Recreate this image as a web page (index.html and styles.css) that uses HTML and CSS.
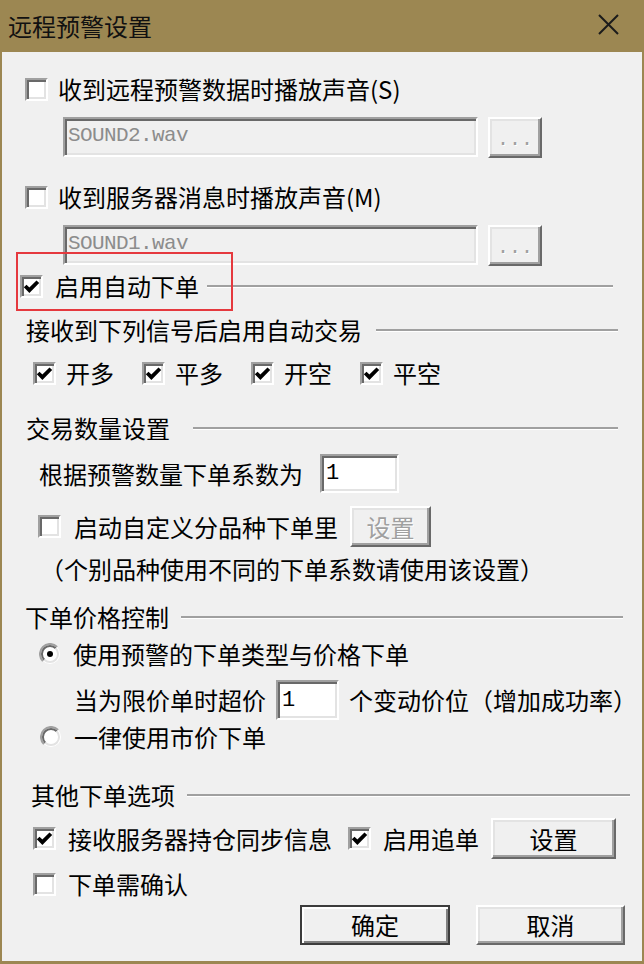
FILE: index.html
```html
<!DOCTYPE html>
<html lang="zh-CN">
<head>
  <meta charset="UTF-8" />
  <title>远程预警设置</title>
  <link rel="stylesheet" href="styles.css">
</head>
<body>
  <div class="window">
    <div class="titlebar">
      <span class="title">远程预警设置</span>
      <svg class="close" viewBox="0 0 21 21" width="21" height="21">
        <path d="M1 1 L20 20 M20 1 L1 20" stroke="#1b1b1b" stroke-width="2" fill="none"/>
      </svg>
    </div>

    <div class="content">
      <div class="row sound">
        <label class="check"><span class="cb"></span><span class="label">收到远程预警数据时播放声音(S)</span></label>
      </div>
      <div class="row file">
        <div class="field disabled path">SOUND2.wav</div>
        <div class="btn disabled browse">...</div>
      </div>

      <div class="row sound sound-msg">
        <label class="check"><span class="cb"></span><span class="label">收到服务器消息时播放声音(M)</span></label>
      </div>
      <div class="row file">
        <div class="field disabled path">SOUND1.wav</div>
        <div class="btn disabled browse">...</div>
      </div>

      <div class="row auto">
        <label class="check wide">
          <span class="cb"><svg viewBox="0 0 18 18"><path d="M3 8.5 L7 12.5 L15 4.5" /></svg></span>
          <span class="label">启用自动下单</span>
        </label>
        <span class="rule"></span>
      </div>

      <div class="row group g-signal">
        <span class="label">接收到下列信号后启用自动交易</span>
        <span class="rule"></span>
      </div>
      <div class="row signals">
        <label class="check"><span class="cb"><svg viewBox="0 0 18 18"><path d="M3 8.5 L7 12.5 L15 4.5" /></svg></span><span class="label">开多</span></label>
        <label class="check"><span class="cb"><svg viewBox="0 0 18 18"><path d="M3 8.5 L7 12.5 L15 4.5" /></svg></span><span class="label">平多</span></label>
        <label class="check"><span class="cb"><svg viewBox="0 0 18 18"><path d="M3 8.5 L7 12.5 L15 4.5" /></svg></span><span class="label">开空</span></label>
        <label class="check"><span class="cb"><svg viewBox="0 0 18 18"><path d="M3 8.5 L7 12.5 L15 4.5" /></svg></span><span class="label">平空</span></label>
      </div>

      <div class="row group g-qty">
        <span class="label">交易数量设置</span>
        <span class="rule"></span>
      </div>
      <div class="row ratio">
        <span class="label">根据预警数量下单系数为</span>
        <div class="field num ratio-num">1</div>
      </div>
      <div class="row custom">
        <label class="check wide"><span class="cb"></span><span class="label">启动自定义分品种下单里</span></label>
        <div class="btn disabled custom-btn">设置</div>
      </div>
      <div class="row note">
        <span class="label">（个别品种使用不同的下单系数请使用该设置）</span>
      </div>

      <div class="row group g-price">
        <span class="label">下单价格控制</span>
        <span class="rule"></span>
      </div>
      <div class="row option first">
        <label class="check wide">
          <svg class="radio" viewBox="0 0 22 22" width="22" height="22">
            <circle cx="11" cy="11" r="10" fill="#fff"/>
            <path d="M3.9 18.1 A10 10 0 0 1 18.1 3.9" stroke="#a0a0a0" stroke-width="2" fill="none"/>
            <path d="M5.3 16.7 A8 8 0 0 1 16.7 5.3" stroke="#696969" stroke-width="2" fill="none"/>
            <path d="M5.3 16.7 A8 8 0 0 0 16.7 5.3" stroke="#e3e3e3" stroke-width="2" fill="none"/>
            <circle cx="11" cy="11" r="3" fill="#000"/>
          </svg>
          <span class="label">使用预警的下单类型与价格下单</span>
        </label>
      </div>
      <div class="row slip">
        <span class="label">当为限价单时超价</span>
        <div class="field num slip-num">1</div>
        <span class="label">个变动价位（增加成功率）</span>
      </div>
      <div class="row option second">
        <label class="check wide">
          <svg class="radio" viewBox="0 0 22 22" width="22" height="22">
            <circle cx="11" cy="11" r="10" fill="#fff"/>
            <path d="M3.9 18.1 A10 10 0 0 1 18.1 3.9" stroke="#a0a0a0" stroke-width="2" fill="none"/>
            <path d="M5.3 16.7 A8 8 0 0 1 16.7 5.3" stroke="#696969" stroke-width="2" fill="none"/>
            <path d="M5.3 16.7 A8 8 0 0 0 16.7 5.3" stroke="#e3e3e3" stroke-width="2" fill="none"/>
          </svg>
          <span class="label">一律使用市价下单</span>
        </label>
      </div>

      <div class="row group g-other">
        <span class="label">其他下单选项</span>
        <span class="rule"></span>
      </div>
      <div class="row other">
        <label class="check wide"><span class="cb"><svg viewBox="0 0 18 18"><path d="M3 8.5 L7 12.5 L15 4.5" /></svg></span><span class="label">接收服务器持仓同步信息</span></label>
        <label class="check wide follow"><span class="cb"><svg viewBox="0 0 18 18"><path d="M3 8.5 L7 12.5 L15 4.5" /></svg></span><span class="label">启用追单</span></label>
        <div class="btn follow-btn">设置</div>
      </div>
      <div class="row confirm">
        <label class="check wide"><span class="cb"></span><span class="label">下单需确认</span></label>
      </div>

      <div class="row actions">
        <div class="btn default">确定</div>
        <div class="btn cancel">取消</div>
      </div>

      <div class="mark"></div>
    </div>
  </div>
</body>
</html>
```

FILE: styles.css
```css
body {
  margin: 0;
  background: #9c8752;
  font-family: "Noto Sans CJK SC", "Noto Sans", sans-serif;
  font-size: 24px;
  color: #000;
}

.window {
  width: 644px;
  height: 964px;
  box-sizing: border-box;
  padding: 0 2px 3px;
  display: flex;
  flex-direction: column;
  background: #9c8752;
}

.titlebar {
  height: 52px;
  flex: none;
  display: flex;
  align-items: center;
  justify-content: space-between;
  padding: 0 23px 0 6px;
}

.title {
  line-height: 1;
  color: #111;
}

.close {
  margin-top: -3px;
}

.content {
  flex: 1;
  position: relative;
  background: #f0f0f0;
  padding-top: 21px;
}

/* rows */
.row {
  display: flex;
  align-items: center;
  height: 32px;
}

.label {
  line-height: 1;
  white-space: nowrap;
}

.check {
  display: flex;
  align-items: center;
  gap: 10px;
}

.check.wide {
  gap: 12px;
}

.rule {
  flex: 1;
  height: 0;
  border-top: 2px solid #a0a0a0;
  border-bottom: 1px solid #fff;
}

/* checkbox */
.cb {
  width: 23px;
  height: 23px;
  box-sizing: border-box;
  flex: none;
  background: #fff;
  border: 2px solid;
  border-color: #a0a0a0 #fff #fff #a0a0a0;
  box-shadow: inset 2px 2px 0 #696969, inset -2px -2px 0 #e3e3e3;
}

.cb svg {
  display: block;
  width: 19px;
  height: 19px;
}

.cb svg path {
  fill: none;
  stroke: #000;
  stroke-width: 3.6;
}

.radio {
  flex: none;
}

/* text fields */
.field {
  box-sizing: border-box;
  height: 100%;
  display: flex;
  align-items: center;
  padding-left: 3px;
  background: #fff;
  border: 2px solid;
  border-color: #a0a0a0 #fff #fff #a0a0a0;
  box-shadow: inset 2px 2px 0 #696969, inset -2px -2px 0 #e3e3e3;
  font-family: "Liberation Mono", monospace;
}

.field.disabled {
  background: #f0f0f0;
  color: #8c8c8c;
}

.path {
  width: 415px;
  font-size: 21px;
  letter-spacing: -0.6px;
  padding-bottom: 4px;
}

.num {
  font-size: 22px;
  padding-left: 4px;
}

.ratio-num {
  width: 79px;
}

.slip-num {
  width: 63px;
}

/* buttons */
.btn {
  box-sizing: border-box;
  height: 100%;
  display: flex;
  align-items: center;
  justify-content: center;
  background: #f0f0f0;
  border: 2px solid;
  border-color: #fff #696969 #696969 #fff;
  box-shadow: inset -2px -2px 0 #a0a0a0, inset 2px 2px 0 #e3e3e3;
  line-height: 1;
}

.btn.disabled {
  color: #a0a0a0;
  text-shadow: 1px 1px 0 #fff;
}

.browse {
  width: 54px;
  height: 41px;
  font-family: "Liberation Mono", monospace;
  font-size: 20px;
  padding-top: 6px;
}

.btn.default {
  width: 150px;
  border-color: #3c3c3c;
  box-shadow: inset 2px 2px 0 #fff, inset -2px -2px 0 #808080;
}

.btn.cancel {
  width: 149px;
}

/* row placement */
.sound {
  padding-left: 23px;
}

.sound-msg {
  margin-top: 24px;
}

.file {
  height: 40px;
  margin-top: 12px;
  padding-left: 61px;
  gap: 10px;
}

.auto {
  margin-top: 5px;
  padding: 0 29px 0 18px;
  gap: 8px;
}

.group {
  padding-left: 24px;
  padding-right: 24px;
}

.g-signal {
  margin-top: 12px;
  gap: 14px;
}

.signals {
  margin-top: 11px;
  padding-left: 31px;
  gap: 28px;
}

.g-qty {
  margin-top: 23px;
  gap: 23px;
}

.ratio {
  height: 39px;
  margin-top: 10px;
  padding-left: 37px;
  gap: 17px;
}

.custom {
  height: 41px;
  margin-top: 13px;
  padding-left: 36px;
  gap: 12px;
}

.custom .check {
  gap: 13px;
}

.custom-btn {
  width: 81px;
}

.note {
  margin-top: 6px;
  padding-left: 38px;
}

.g-price {
  margin-top: 16px;
  padding-left: 23px;
  padding-right: 19px;
  gap: 12px;
}

.option {
  padding-left: 37px;
}

.option.first {
  margin-top: 5px;
}

.option.second {
  margin-top: 1px;
  padding-left: 38px;
}

.slip {
  height: 40px;
  margin-top: 10px;
  padding-left: 72px;
  gap: 10px;
}

.g-other {
  margin-top: 26px;
  padding-left: 29px;
  padding-right: 12px;
  gap: 12px;
}

.other {
  height: 41px;
  margin-top: 7px;
  padding-left: 31px;
  gap: 12px;
}

.other .follow {
  margin-left: 4px;
}

.follow-btn {
  width: 125px;
}

.confirm {
  margin-top: 9px;
  padding-left: 31px;
}

.actions {
  height: 40px;
  margin-top: 5px;
  padding-left: 298px;
  gap: 26px;
}

/* red annotation frame */
.mark {
  position: absolute;
  left: 14px;
  top: 200px;
  width: 217px;
  height: 59px;
  box-sizing: border-box;
  border: 2px solid #e5393e;
}
```
